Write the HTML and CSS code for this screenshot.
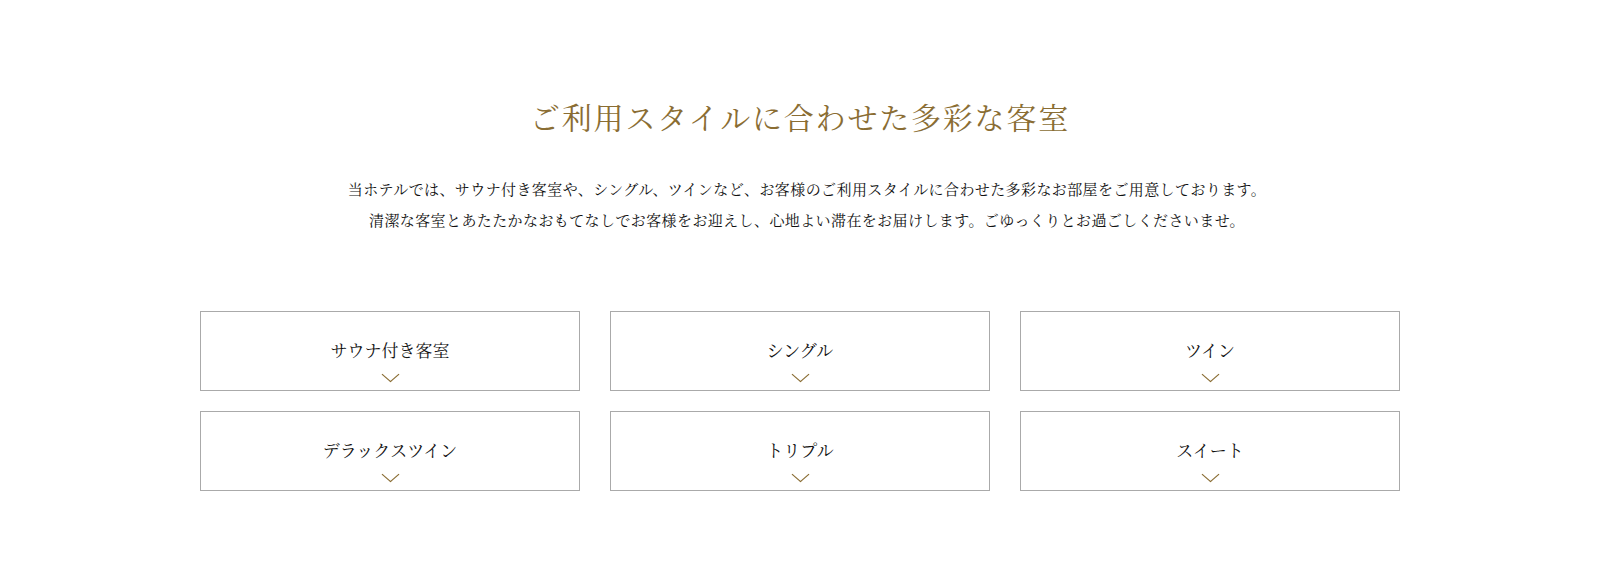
FILE: index.html
```html
<!DOCTYPE html>
<html lang="ja">

<head>
    <meta charset="utf-8">
    <title>客室</title>
    <link rel="stylesheet" href="styles.css">
</head>

<body>
    <section class="rooms">
        <h2 class="rooms-title">ご利用スタイルに合わせた多彩な客室</h2>
        <p class="rooms-lead">
            当ホテルでは、サウナ付き客室や、シングル、ツインなど、お客様のご利用スタイルに合わせた多彩なお部屋をご用意しております。<br>
            清潔な客室とあたたかなおもてなしでお客様をお迎えし、心地よい滞在をお届けします。ごゆっくりとお過ごしくださいませ。
        </p>

        <ul class="room-list">
            <li class="room-item"><a href="#">サウナ付き客室</a></li>
            <li class="room-item"><a href="#">シングル</a></li>
            <li class="room-item"><a href="#">ツイン</a></li>
            <li class="room-item"><a href="#">デラックスツイン</a></li>
            <li class="room-item"><a href="#">トリプル</a></li>
            <li class="room-item"><a href="#">スイート</a></li>
        </ul>
    </section>
</body>

</html>
```

FILE: styles.css
```css
* {
    margin: 0;
    padding: 0;
    box-sizing: border-box;
}

body {
    background-color: #fff;
    color: #111;
    font-family: "Noto Serif CJK JP", "Liberation Serif", "Noto Sans CJK JP", serif;
}

.rooms {
    width: 1200px;
    margin: 0 auto;
    padding-top: 94px;
    text-align: center;
}

.rooms-title {
    font-size: 30px;
    font-weight: 400;
    line-height: 45px;
    letter-spacing: 0.06em;
    color: #8a6d33;
}

.rooms-lead {
    margin-top: 34px;
    padding-left: 14px;
    font-size: 15px;
    line-height: 31px;
    letter-spacing: 0.4px;
}

.room-list {
    list-style: none;
    margin-top: 76px;
    display: grid;
    grid-template-columns: repeat(3, 380px);
    column-gap: 30px;
    row-gap: 20px;
}

.room-item a {
    display: flex;
    flex-direction: column;
    align-items: center;
    height: 80px;
    padding-top: 25px;
    border: 1px solid #aaa;
    color: #111;
    text-decoration: none;
    font-size: 17px;
    line-height: 25px;
}

.room-item a::after {
    content: "";
    display: block;
    width: 10px;
    height: 10px;
    margin-top: 7px;
    border-right: 1px solid #8a6d33;
    border-bottom: 1px solid #8a6d33;
    transform: scaleX(1.15) rotate(45deg);
}
```
